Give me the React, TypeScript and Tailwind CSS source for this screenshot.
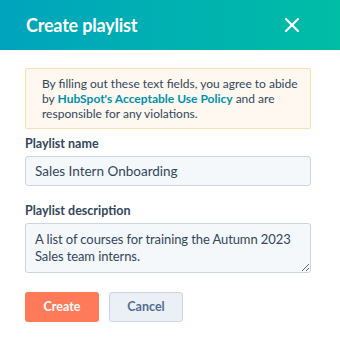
import { X } from 'lucide-react'

export default function App() {
  return (
    <div className="w-[340px] h-[339px] bg-white text-[#33475b]" style={{ fontFamily: 'Lato, "Noto Sans", sans-serif' }}>
      <div className="h-[50px] flex items-center justify-between pl-[26px] pr-[36px] bg-gradient-to-r from-[#00a4bd] to-[#00bda5]">
        <h1 className="text-white text-[18px] font-bold tracking-[-0.2px]">Create playlist</h1>
        <X className="text-white w-[24px] h-[24px]" strokeWidth={2.2} />
      </div>
      <div className="px-[25px] pt-[18px]">
        <div className="w-[286px] bg-[#fef8f0] border border-[#fae0b5] rounded-[2px] pl-[16px] pr-[10px] py-[7px] text-[12px] leading-[15px]">
          By filling out these text fields, you agree to abide by{' '}
          <span className="font-bold text-[#0091ae]">HubSpot's Acceptable Use Policy</span> and are responsible for any violations.
        </div>
        <label className="block mt-[7px] text-[12.5px] font-bold leading-[16px]">Playlist name</label>
        <div className="mt-[4px] w-[286px] h-[30px] bg-[#f5f8fa] border border-[#cbd6e2] rounded-[3px] px-[9px] flex items-center text-[13.5px]">
          Sales Intern Onboarding
        </div>
        <label className="block mt-[17px] text-[12.5px] font-bold leading-[16px]">Playlist description</label>
        <textarea
          className="mt-[4px] block w-[286px] h-[50px] bg-[#f5f8fa] border border-[#cbd6e2] rounded-[3px] pl-[9px] pr-[3px] py-[7px] text-[13px] tracking-[-0.1px] leading-[17px] outline-none resize-y"
          defaultValue="A list of courses for training the Autumn 2023 Sales team interns."
        />
        <div className="mt-[19px] flex gap-[10px]">
          <button className="w-[74px] h-[30px] bg-[#ff7a59] text-white text-[12.5px] font-bold rounded-[3px]">Create</button>
          <button className="w-[74px] h-[30px] bg-[#eaf0f6] border border-[#cbd6e2] text-[#506e91] text-[12.5px] font-bold rounded-[3px]">Cancel</button>
        </div>
      </div>
    </div>
  )
}
